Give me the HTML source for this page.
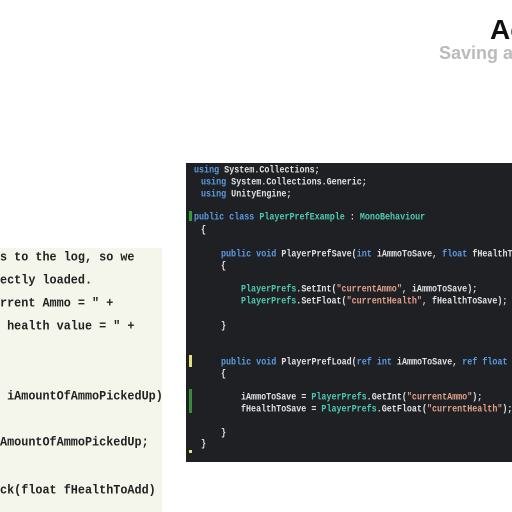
<!DOCTYPE html>
<html><head><style>
body{margin:0;width:512px;height:512px;background:#fff;position:relative;overflow:hidden;font-family:"Liberation Sans",sans-serif}
.t1{position:absolute;left:490px;top:14px;font-weight:bold;font-size:28px;color:#111;white-space:nowrap}
.t2{position:absolute;left:439px;top:43px;font-weight:bold;font-size:18px;color:#bbb;white-space:nowrap}
.left{position:absolute;left:0;top:248px;width:162px;height:264px;background:#f4f6ec}
.left div{position:absolute;left:0;white-space:pre;font-family:"Liberation Mono",monospace;font-size:11.8px;color:#222;font-weight:bold;transform:scaleY(1.1)}
.code{position:absolute;left:186px;top:163px;width:326px;height:299px;background:#1e2024}
.code div{position:absolute;white-space:pre;font-family:"Liberation Mono",monospace;font-size:8.4px;font-weight:bold;color:#e0e0e0;transform:scaleY(1.2);transform-origin:0 50%}
.k{color:#5a9ae0}.c{color:#4ec9b0}.s{color:#e0a08a}
.code div.bar{position:absolute;width:3px;transform:none}
</style></head><body>
<div class="t1">Ac</div>
<div class="t2">Saving ar</div>
<div class="left">
<div style="top:2px">s to the log, so we</div>
<div style="top:25px">ectly loaded.</div>
<div style="top:48px">rrent Ammo = " +</div>
<div style="top:71px"> health value = " +</div>
<div style="top:141px"> iAmountOfAmmoPickedUp)</div>
<div style="top:187px">AmountOfAmmoPickedUp;</div>
<div style="top:235px">ck(float fHealthToAdd)</div>
</div>
<div class="code">
<div style="left:8px;top:2px"><span class="k">using</span> System.Collections;</div>
<div style="left:15px;top:14px"><span class="k">using</span> System.Collections.Generic;</div>
<div style="left:15px;top:26px"><span class="k">using</span> UnityEngine;</div>
<div style="left:8px;top:49px"><span class="k">public class</span> <span class="c">PlayerPrefExample</span> : <span class="c">MonoBehaviour</span></div>
<div style="left:15px;top:62px">{</div>
<div style="left:35px;top:86px"><span class="k">public void</span> PlayerPrefSave(<span class="k">int</span> iAmmoToSave, <span class="k">float</span> fHealthT</div>
<div style="left:35px;top:98px">{</div>
<div style="left:55px;top:121px"><span class="c">PlayerPrefs</span>.SetInt(<span class="s">"currentAmmo"</span>, iAmmoToSave);</div>
<div style="left:55px;top:133px"><span class="c">PlayerPrefs</span>.SetFloat(<span class="s">"currentHealth"</span>, fHealthToSave);</div>
<div style="left:35px;top:158px">}</div>
<div style="left:35px;top:194px"><span class="k">public void</span> PlayerPrefLoad(<span class="k">ref int</span> iAmmoToSave, <span class="k">ref float</span></div>
<div style="left:35px;top:206px">{</div>
<div style="left:55px;top:229px">iAmmoToSave = <span class="c">PlayerPrefs</span>.GetInt(<span class="s">"currentAmmo"</span>);</div>
<div style="left:55px;top:241px">fHealthToSave = <span class="c">PlayerPrefs</span>.GetFloat(<span class="s">"currentHealth"</span>);</div>
<div style="left:35px;top:265px">}</div>
<div style="left:15px;top:276px">}</div>
<div class="bar" style="left:3px;top:48px;height:10px;background:#3a9a3a"></div>
<div class="bar" style="left:3px;top:192px;height:12px;background:#e6e07a"></div>
<div class="bar" style="left:3px;top:226px;height:24px;background:#3a8a3a"></div>
<div class="bar" style="left:3px;top:287px;height:3px;background:#e6e07a"></div>
</div>
</body></html>
